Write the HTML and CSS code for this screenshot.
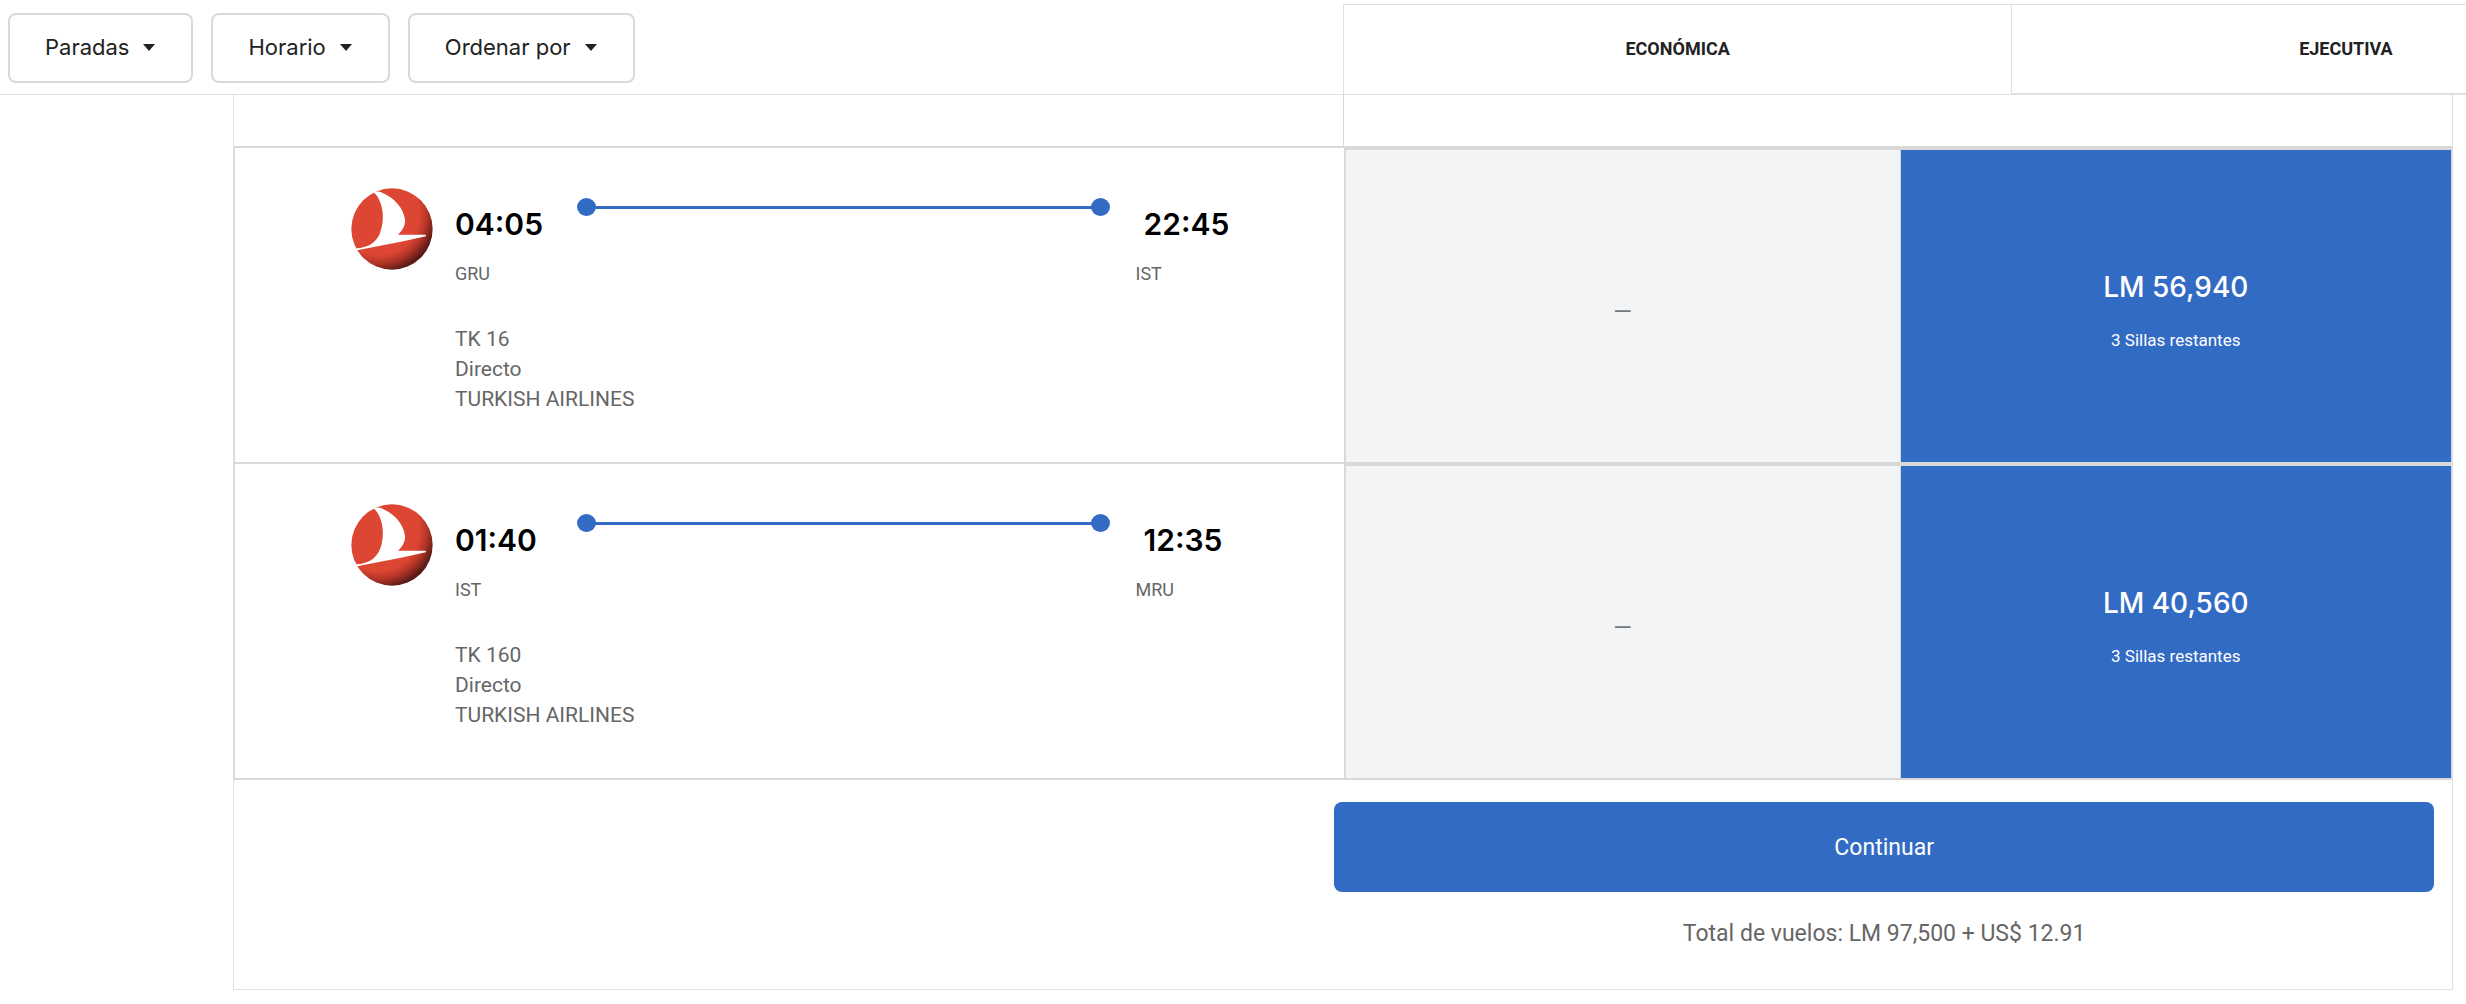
FILE: index.html
```html
<!DOCTYPE html>
<html lang="es">
  <head>
    <meta charset="UTF-8" />
    <meta name="viewport" content="width=device-width, initial-scale=1.0" />
    <title>Vuelos</title>
    <link rel="stylesheet" href="styles.css">
  </head>
  <body>
    <header class="toolbar">
      <div class="filters">
        <button type="button" class="filter">Paradas <span class="caret"></span></button>
        <button type="button" class="filter">Horario <span class="caret"></span></button>
        <button type="button" class="filter">Ordenar por <span class="caret"></span></button>
      </div>
      <div class="cabin">ECONÓMICA</div>
      <div class="cabin cabin-last">EJECUTIVA</div>
    </header>

    <main class="results">
      <div class="spacer">
        <div class="spacer-fares"></div>
      </div>

      <section class="flight">
        <div class="flight-info">
          <svg class="logo" viewBox="64 54 246 246" role="img" aria-label="Turkish Airlines">
            <defs>
              <radialGradient id="ball" gradientUnits="userSpaceOnUse" cx="146" cy="132" r="176">
                <stop offset="0" stop-color="#dc4632" />
                <stop offset="0.7" stop-color="#dc4632" />
                <stop offset="0.84" stop-color="#b23427" />
                <stop offset="1" stop-color="#5a1a16" />
              </radialGradient>
            </defs>
            <circle cx="187" cy="177" r="122" fill="url(#ball)" />
            <path d="M132 67 Q141 63 151 65 C196 82 223 117 226 150 C227 166 219 181 205 194 L286 194 Q292 196 288 199 L214 215 L82 241 Q77 238 81 235 C112 233 138 220 150 192 C168 148 160 92 132 67 Z" fill="#fff" />
          </svg>
          <div class="flight-body">
            <div class="route">
              <div class="stop">
                <div class="time">04:05</div>
                <div class="airport">GRU</div>
              </div>
              <div class="track"></div>
              <div class="stop arrival">
                <div class="time">22:45</div>
                <div class="airport">IST</div>
              </div>
            </div>
            <div class="details">
              <div>TK 16</div>
              <div>Directo</div>
              <div>TURKISH AIRLINES</div>
            </div>
          </div>
        </div>
        <div class="fare fare-empty">—</div>
        <button type="button" class="fare fare-selected">
          <span class="price">LM 56,940</span>
          <span class="seats">3 Sillas restantes</span>
        </button>
      </section>

      <section class="flight">
        <div class="flight-info">
          <svg class="logo" viewBox="64 54 246 246" role="img" aria-label="Turkish Airlines">
            <circle cx="187" cy="177" r="122" fill="url(#ball)" />
            <path d="M132 67 Q141 63 151 65 C196 82 223 117 226 150 C227 166 219 181 205 194 L286 194 Q292 196 288 199 L214 215 L82 241 Q77 238 81 235 C112 233 138 220 150 192 C168 148 160 92 132 67 Z" fill="#fff" />
          </svg>
          <div class="flight-body">
            <div class="route">
              <div class="stop">
                <div class="time">01:40</div>
                <div class="airport">IST</div>
              </div>
              <div class="track"></div>
              <div class="stop arrival">
                <div class="time">12:35</div>
                <div class="airport">MRU</div>
              </div>
            </div>
            <div class="details">
              <div>TK 160</div>
              <div>Directo</div>
              <div>TURKISH AIRLINES</div>
            </div>
          </div>
        </div>
        <div class="fare fare-empty">—</div>
        <button type="button" class="fare fare-selected">
          <span class="price">LM 40,560</span>
          <span class="seats">3 Sillas restantes</span>
        </button>
      </section>

      <footer class="summary">
        <div class="checkout">
          <button type="button" class="continue">Continuar</button>
          <p class="total">Total de vuelos: LM 97,500 + US$ 12.91</p>
        </div>
      </footer>
    </main>
  </body>
</html>
```

FILE: styles.css
```css
* {
  box-sizing: border-box;
}

body {
  margin: 0;
  background-color: #fff;
  color: #222;
  font-family: Roboto, "Liberation Sans", sans-serif;
  overflow-x: hidden;
}

button {
  font-family: inherit;
  cursor: pointer;
}

/* Top bar: the cabin columns run past the right edge */
.toolbar {
  display: grid;
  grid-template-columns: calc(233px + (100% - 246px) / 2) 27.1% 27.1%;
  height: 95px;
  border-bottom: 1px solid #e0e0e0;
  overflow: hidden;
}

.filters {
  display: flex;
  gap: 18px;
  padding: 13px 8px 0;
  align-items: flex-start;
}

.filter {
  display: flex;
  align-items: center;
  gap: 14px;
  height: 70px;
  padding: 0 36px 2px 35px;
  background-color: #fff;
  border: 2px solid #d9d9d9;
  border-radius: 8px;
  color: #222;
  font-family: Inter, sans-serif;
  font-size: 22px;
}

.caret {
  border-left: 6px solid transparent;
  border-right: 6px solid transparent;
  border-top: 7px solid #222;
}

.cabin {
  display: flex;
  align-items: center;
  justify-content: center;
  margin-top: 4px;
  padding-bottom: 2px;
  border-top: 1px solid #e0e0e0;
  border-left: 1px solid #e0e0e0;
  font-size: 18px;
  font-weight: 700;
}

.cabin-last {
  border-bottom: 1px solid #e0e0e0;
}

.results {
  margin: 0 13px 0 233px;
  border: 1px solid #e0e0e0;
  border-top: none;
}

.spacer {
  display: grid;
  grid-template-columns: 1fr 1fr;
  height: 51px;
}

.spacer-fares {
  grid-column: 2;
  border-left: 1px solid #d9d9d9;
}

/* Flights */
.flight {
  display: grid;
  grid-template-columns: 199fr 100fr 99fr;
  border-top: 2px solid #d9d9d9;
  border-left: 1px solid #d9d9d9;
}

.flight-info {
  display: flex;
  gap: 22px;
  padding: 40px 108px 48px 116px;
}

.logo {
  flex: none;
  width: 82px;
  height: 82px;
}

.flight-body {
  flex: 1;
}

.route {
  display: flex;
}

.stop {
  width: 122px;
  padding-top: 16px;
}

.arrival {
  width: 100px;
  margin-left: 26px;
}

.arrival .time {
  padding-left: 8px;
}

.time {
  color: #000;
  font-family: Inter, sans-serif;
  font-size: 30px;
  font-weight: 600;
  line-height: 40px;
}

.airport {
  margin-top: 18px;
  color: #666;
  font-size: 18px;
  line-height: 24px;
}

/* Line with a dot at each end */
.track {
  display: flex;
  flex: 1;
  align-items: center;
  justify-content: space-between;
  height: 38px;
  background: linear-gradient(#326bc3, #326bc3) center / calc(100% - 18px) 3px no-repeat;
}

.track::before,
.track::after {
  content: "";
  width: 19px;
  height: 18px;
  border-radius: 50%;
  background-color: #326bc3;
}

.details {
  margin-top: 38px;
  color: #666;
  font-size: 21px;
  line-height: 30px;
}

.fare {
  display: flex;
  flex-direction: column;
  align-items: center;
  justify-content: center;
  border: none;
  border-top: 2px solid #d9d9d9;
}

.fare-empty {
  padding-top: 12px;
  background-color: #f3f4f6;
  border-left: 2px solid #d9d9d9;
  border-right: 1px solid #d9d9d9;
  color: #777;
  font-size: 24px;
}

.fare-selected {
  gap: 24px;
  padding: 10px 0 0;
  background-color: #326bc3;
  border-right: 1px solid #ccd9ef;
  color: #fff;
}

.price {
  font-family: Inter, sans-serif;
  font-size: 28px;
  font-weight: 500;
  line-height: 34px;
}

.seats {
  font-size: 17px;
  line-height: 24px;
}

/* Footer */
.summary {
  display: flex;
  justify-content: flex-end;
  padding: 22px 18px 40px;
  border-top: 2px solid #d9d9d9;
}

.checkout {
  width: 50.4%;
  text-align: center;
}

.continue {
  width: 100%;
  height: 90px;
  background-color: #326bc3;
  border: none;
  border-radius: 8px;
  color: #fff;
  font-size: 23px;
}

.total {
  margin: 27px 0 0;
  color: #666;
  font-size: 23px;
  line-height: 30px;
}
```
